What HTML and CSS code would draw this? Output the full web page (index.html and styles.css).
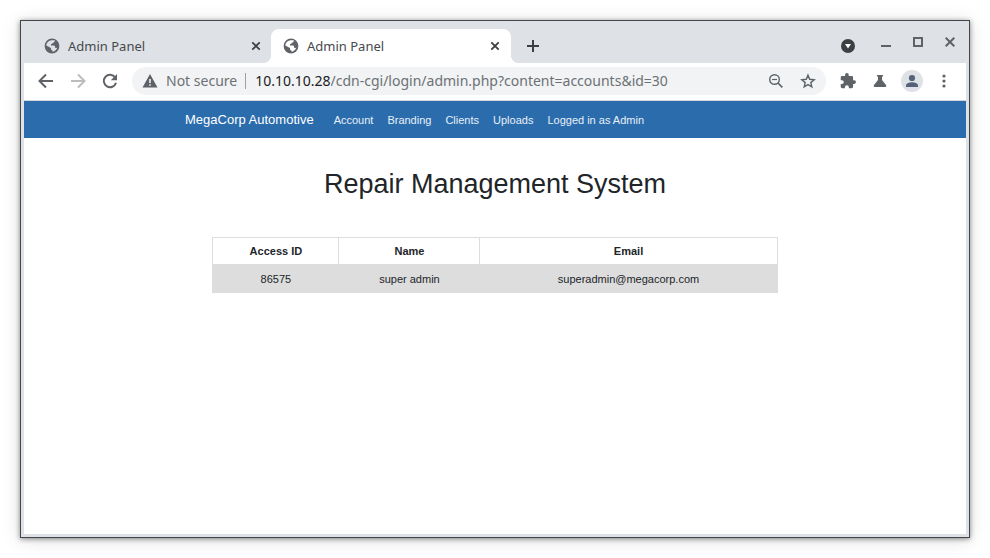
FILE: index.html
```html
<!DOCTYPE html>
<html lang="en">
<head>
<meta charset="utf-8">
<meta name="viewport" content="width=device-width, initial-scale=1">
<title>Admin Panel</title>
<link rel="stylesheet" href="styles.css">
</head>
<body>
<svg width="0" height="0" class="sprite" aria-hidden="true">
  <symbol id="globe" viewBox="0 0 16 16">
    <circle cx="8" cy="8" r="7.4" fill="#5f6368"/>
    <path d="M8.300 2.300h2.500c0 1.300-.5 2.200-1.900 2.500-.3.800-.9 1.200-1.900 1.300v1.400h2.400c1.200 0 1.800.6 1.800 1.500v1h1.200c.4 0 .7-.2.9-.5-.6 2.300-2.400 3.900-4.800 4.200v-1.300c-1-.1-1.500-.7-1.500-1.500v-.8L2.300 7.400C2.600 4.400 5 2.300 8.300 2.300z" fill="currentColor"/>
  </symbol>
  <symbol id="cross" viewBox="0 0 10 10">
    <path d="M1.300 1.300l7.400 7.400M8.700 1.300L1.300 8.700" fill="none" stroke="currentColor" stroke-width="1.800"/>
  </symbol>
</svg>
<div class="window">
  <header class="tabstrip">
    <div class="tab">
      <svg class="favicon" aria-hidden="true"><use href="#globe"/></svg>
      <span class="tab-title">Admin Panel</span>
      <button class="tab-close" aria-label="Close tab"><svg width="10" height="10"><use href="#cross"/></svg></button>
    </div>
    <div class="tab active">
      <svg class="favicon" aria-hidden="true"><use href="#globe"/></svg>
      <span class="tab-title">Admin Panel</span>
      <button class="tab-close" aria-label="Close tab"><svg width="10" height="10"><use href="#cross"/></svg></button>
    </div>
    <button class="new-tab" aria-label="New tab"><svg width="12" height="12" viewBox="0 0 12 12"><path d="M6 0v12M0 6h12" stroke="#3c4043" stroke-width="2"/></svg></button>
    <div class="window-controls">
      <button class="tab-search" aria-label="Search tabs"><svg width="14" height="14" viewBox="0 0 14 14"><circle cx="7" cy="7" r="7" fill="#3c4043"/><path d="M4 5h6L7 9.500z" fill="#fff"/></svg></button>
      <button aria-label="Minimize"><svg width="10" height="10" viewBox="0 0 10 10"><path d="M0 9h10" stroke="#5f6368" stroke-width="2"/></svg></button>
      <button aria-label="Maximize"><svg width="10" height="10" viewBox="0 0 10 10"><path d="M1 1h8v8H1z" fill="none" stroke="#5f6368" stroke-width="2"/></svg></button>
      <button aria-label="Close"><svg width="10" height="10" viewBox="0 0 10 10"><path d="M.7.7l8.600 8.600M9.300.7L.7 9.300" stroke="#5f6368" stroke-width="2"/></svg></button>
    </div>
  </header>
  <div class="toolbar">
    <button class="tool" aria-label="Back"><svg width="16" height="16" viewBox="0 0 16 16"><path d="M15 8H2.500M8 1.500L1.500 8 8 14.500" fill="none" stroke="#5f6368" stroke-width="2"/></svg></button>
    <button class="tool" aria-label="Forward" disabled><svg width="16" height="16" viewBox="0 0 16 16"><path d="M1 8h12.500M8 1.500L14.500 8 8 14.500" fill="none" stroke="#babcbe" stroke-width="2"/></svg></button>
    <button class="tool" aria-label="Reload"><svg width="16" height="16" viewBox="0 0 16 16"><path d="M13.200 4.500A6.200 6.200 0 1 0 14 9.700" fill="none" stroke="#5f6368" stroke-width="2"/><path d="M15 1v6.200H8.800z" fill="#5f6368"/></svg></button>
    <form class="omnibox">
      <svg width="16" height="16" viewBox="0 0 16 16" aria-hidden="true"><path fill="#5f6368" fill-rule="evenodd" d="M8 1l7.500 13.500H.5zM7.200 6v4h1.600V6zM7.200 11.200v1.600h1.600v-1.600z"/></svg>
      <span class="security">Not secure</span>
      <label class="host" for="address">10.10.10.28</label>
      <input id="address" class="address" type="text" value="/cdn-cgi/login/admin.php?content=accounts&amp;id=30">
      <button type="button" aria-label="Zoom"><svg width="16" height="16" viewBox="0 0 16 16"><circle cx="6.500" cy="6.500" r="4.800" fill="none" stroke="#5f6368" stroke-width="1.400"/><path d="M4 6.500h5" stroke="#5f6368" stroke-width="1.200"/><path d="M10 10l4.300 4.300" stroke="#5f6368" stroke-width="1.700"/></svg></button>
      <button type="button" aria-label="Bookmark this page"><svg width="16" height="16" viewBox="0 0 16 16"><path d="M8 2.200l1.700 4.100 4.500.4-3.400 2.900 1 4.300L8 11.600l-3.800 2.300 1-4.300-3.400-2.900 4.500-.4z" fill="none" stroke="#5f6368" stroke-width="1.400"/></svg></button>
    </form>
    <button class="tool" aria-label="Extensions"><svg width="16" height="16" viewBox="1 1 22 22"><path fill="#5f6368" d="M20.500 11H19V7a2 2 0 0 0-2-2h-4V3.500a2.500 2.500 0 0 0-5 0V5H4a2 2 0 0 0-2 2v3.800h1.500a2.700 2.700 0 0 1 0 5.400H2V20a2 2 0 0 0 2 2h3.800v-1.500a2.700 2.700 0 0 1 5.400 0V22H17a2 2 0 0 0 2-2v-4h1.500a2.500 2.500 0 0 0 0-5z"/></svg></button>
    <button class="tool" aria-label="Experiments"><svg width="14" height="14" viewBox="0 0 14 14"><path fill="#5f6368" d="M4 1h6v1.500H9v3.500l4 5c.8 1 .2 2-.9 2H1.900c-1.100 0-1.700-1-.9-2l4-5V2.500H4z"/></svg></button>
    <button class="tool" aria-label="Profile"><svg width="22" height="22" viewBox="0 0 22 22"><circle cx="11" cy="11" r="11" fill="#dee1e6"/><circle cx="11" cy="8" r="3.100" fill="#56617a"/><path fill="#56617a" d="M5 17v-1.500c0-2.100 3.500-3.200 6-3.200s6 1.100 6 3.200V17z"/></svg></button>
    <button class="tool" aria-label="Menu"><svg width="4" height="14" viewBox="0 0 4 14"><g fill="#5f6368"><circle cx="2" cy="2" r="1.600"/><circle cx="2" cy="7" r="1.600"/><circle cx="2" cy="12" r="1.600"/></g></svg></button>
  </div>
  <div class="page">
    <nav class="navbar">
      <div class="container">
        <a class="brand" href="#">MegaCorp Automotive</a>
        <a href="#">Account</a>
        <a href="#">Branding</a>
        <a href="#">Clients</a>
        <a href="#">Uploads</a>
        <a href="#">Logged in as Admin</a>
      </div>
    </nav>
    <main>
      <h1>Repair Management System</h1>
      <table>
        <colgroup><col class="col-id"><col class="col-name"><col></colgroup>
        <thead><tr><th scope="col">Access ID</th><th scope="col">Name</th><th scope="col">Email</th></tr></thead>
        <tbody><tr><td>86575</td><td>super admin</td><td>superadmin@megacorp.com</td></tr></tbody>
      </table>
    </main>
  </div>
</div>
</body>
</html>
```
FILE: styles.css
```css
* {
  box-sizing: border-box;
}

body {
  display: flex;
  min-height: 100vh;
  margin: 0;
  padding: 20px;
  background: #fff;
  font-family: "Noto Sans", sans-serif;
}

button {
  display: flex;
  align-items: center;
  justify-content: center;
  flex: none;
  padding: 0;
  border: 0;
  background: none;
}

svg {
  flex: none;
}

.sprite {
  position: absolute;
}

.window {
  display: flex;
  flex: 1;
  flex-direction: column;
  min-width: 0;
  padding: 0 3px 3px;
  border: 1px solid #43474a;
  background: #dee1e6;
  box-shadow: 0 1px 5px rgba(0, 0, 0, 0.45), 0 2px 18px rgba(0, 0, 0, 0.13);
}

.tabstrip {
  display: flex;
  height: 42px;
  padding: 8px 0 0 8px;
}

.tab {
  position: relative;
  display: flex;
  align-items: center;
  width: 239px;
  padding: 0 9px 0 12px;
  color: #45494d;
  font-size: 13px;
}

.tab.active {
  width: 240px;
  padding-right: 10px;
  border-radius: 8px 8px 0 0;
  background: #fff;
}

.tab.active::before,
.tab.active::after {
  position: absolute;
  bottom: 0;
  width: 8px;
  height: 8px;
  content: "";
}

.tab.active::before {
  right: 100%;
  background: radial-gradient(circle at 0 0, transparent 8px, #fff 8px);
}

.tab.active::after {
  left: 100%;
  background: radial-gradient(circle at 100% 0, transparent 8px, #fff 8px);
}

.favicon {
  width: 16px;
  height: 16px;
  color: #dee1e6;
}

.active .favicon {
  color: #fff;
}

.tab-title {
  flex: 1;
  margin-left: 8px;
}

.tab-close {
  width: 12px;
  height: 12px;
  color: #3c4043;
}

.new-tab {
  width: 28px;
  margin-left: 8px;
}

.window-controls {
  display: flex;
  align-items: center;
  gap: 22px;
  margin-left: auto;
  padding: 0 11px 8px 0;
}

.tab-search {
  align-self: flex-end;
  margin-right: 4px;
  margin-bottom: 2px;
}

.toolbar {
  display: flex;
  align-items: center;
  height: 38px;
  padding: 0 6px 1px;
  border-bottom: 1px solid #d5d7da;
  background: #fff;
}

.tool {
  width: 32px;
  height: 28px;
}

.omnibox {
  display: flex;
  flex: 1;
  align-items: center;
  min-width: 0;
  height: 28px;
  margin: 0 6px;
  padding: 0 10px;
  border-radius: 14px;
  background: #f1f3f4;
  font-size: 14px;
  line-height: 16px;
}

.omnibox button {
  width: 16px;
  margin-left: 16px;
}

.security {
  margin-left: 8px;
  padding-right: 8px;
  border-right: 1px solid #9aa0a6;
  color: #6d7175;
  white-space: nowrap;
}

.host {
  margin-left: 9px;
  color: #202124;
}

.address {
  flex: 1;
  min-width: 0;
  height: 20px;
  padding: 0;
  border: 0;
  outline: 0;
  background: none;
  color: #6d7175;
  font: inherit;
  line-height: 20px;
}

.page {
  flex: 1;
  background: #fff;
  color: #212529;
  font-family: "Liberation Sans", Arial, sans-serif;
  font-size: 11px;
}

.navbar {
  padding: 9px 0 8px;
  background: #2b6cad;
}

.container {
  display: flex;
  align-items: baseline;
  gap: 14px;
  max-width: 640px;
  margin: 0 auto;
  padding: 0 10px;
  line-height: 20px;
}

.container a {
  color: #e8f0f7;
  text-decoration: none;
}

.container .brand {
  margin-right: 6px;
  color: #fff;
  font-size: 13px;
}

h1 {
  margin: 30px 0 36px;
  font-size: 27px;
  font-weight: 400;
  line-height: 33px;
  text-align: center;
}

table {
  width: 60%;
  margin: 0 auto;
  border-collapse: collapse;
  table-layout: fixed;
}

.col-id {
  width: 126px;
}

.col-name {
  width: 25%;
}

th,
td {
  padding: 5px;
  border: 1px solid #ddd;
  line-height: 16px;
  text-align: center;
}

td {
  padding-top: 6px;
}

tbody tr {
  background: #ddd;
}
```
